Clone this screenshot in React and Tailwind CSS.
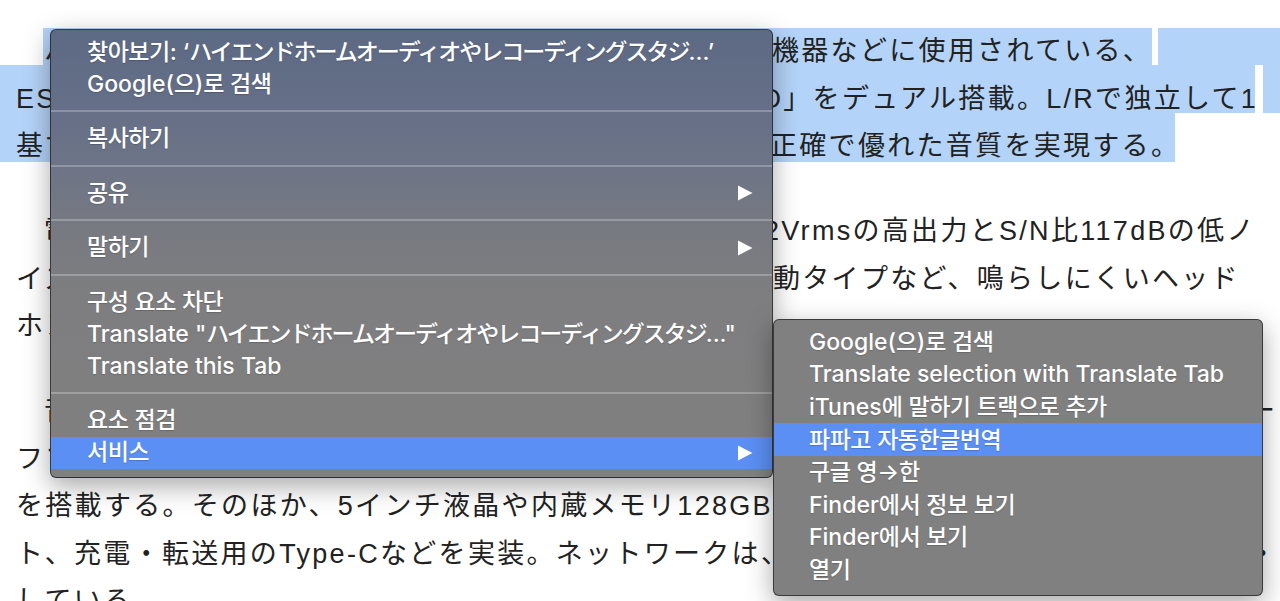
import React from "react";

const SEL = "bg-[#b4d3f8]";

function Hid({ w, children }) {
  return (
    <span className={"inline-block overflow-hidden whitespace-nowrap align-top " + w}>
      {children}
    </span>
  );
}

function typeOf(ch) {
  const c = ch.codePointAt(0);
  if (c >= 0xac00 && c <= 0xd7a3) return "ko";
  if ((c >= 0x3040 && c <= 0x30ff) || (c >= 0x4e00 && c <= 0x9fff)) return "ja";
  return "la";
}

const TRACK = {
  ko: "tracking-[-0.5px]",
  ja: "tracking-[-2px]",
  la: "",
};

function Txt({ s }) {
  const runs = [];
  let cur = null;
  for (const ch of s) {
    const t = typeOf(ch);
    if (cur && cur.t === t) cur.s += ch;
    else {
      cur = { t, s: ch };
      runs.push(cur);
    }
  }
  return (
    <>
      {runs.map((r, i) => (
        <span key={i} className={TRACK[r.t]}>
          {r.s}
        </span>
      ))}
    </>
  );
}

function Arrow() {
  return (
    <svg width="16" height="16" viewBox="0 0 16 16" className="shrink-0">
      <path d="M1 0.5 L15.5 8 L1 15.5 Z" fill="white" />
    </svg>
  );
}

function Row({ label, arrow, active, h = "h-[32px]", pl = "pl-[36px]" }) {
  return (
    <div
      className={
        "flex items-center justify-between pr-[19px] " +
        h +
        " " +
        pl +
        " " +
        (active ? "bg-[#5b8ff4]" : "")
      }
    >
      <span className="whitespace-nowrap">
        <Txt s={label} />
      </span>
      {arrow && <Arrow />}
    </div>
  );
}

function Sep() {
  return (
    <div className="flex h-[22.5px] items-center">
      <div className="h-[2px] w-full bg-white/25" />
    </div>
  );
}

function Article() {
  return (
    <div className="whitespace-nowrap pt-[28px] font-['Liberation_Sans','Noto_Sans_CJK_JP',sans-serif] text-[27px] tracking-[2.3px] text-[#222]">
      {/* paragraph 1 (selected) */}
      <div className="flex h-[37px] leading-[47.5px]">
        <div className="w-[43px] shrink-0" />
        <div className={"w-[1109px] shrink-0 pl-[1px] " + SEL}>
          <Hid w="w-[728px]">ハイエンドホームオーディオやレコーディングスタジオの</Hid>
          機器などに使用されている、
        </div>
        <div className="w-[6px] shrink-0" />
        <div className={"flex-1 " + SEL} />
      </div>
      <div className="flex h-[48px] leading-[47.5px]">
        <div className={"w-[1255px] shrink-0 pl-[16px] pt-[10.75px] " + SEL}>
          <Hid w="w-[744px]">ESS製の最上位DAC「ES9038PR</Hid>
          O」をデュアル搭載。L/Rで独立して1
        </div>
        <div className="w-[8px] shrink-0" />
        <div className={"flex-1 " + SEL} />
      </div>
      <div className="flex h-[49px] leading-[47.5px]">
        <div className={"w-[1175px] shrink-0 pl-[16px] pt-[10.25px] " + SEL}>
          <Hid w="w-[754px]">基ずつDACを割り当てることで、より</Hid>
          正確で優れた音質を実現する。
        </div>
      </div>

      {/* paragraph 2 */}
      <div className="mt-[46.25px] leading-[47.5px]">
        <div className="h-[47.5px] pl-[44px]">
          <Hid w="w-[720px]">電源部はアナログとデジタルを分離し、最大</Hid>
          2Vrmsの高出力とS/N比117dBの低ノ
        </div>
        <div className="h-[47.5px] pl-[16px]">
          <Hid w="w-[757px]">イズを実現し、バランス接続時には平面駆</Hid>
          動タイプなど、鳴らしにくいヘッド
        </div>
        <div className="h-[47.5px] pl-[16px]">ホンもしっかりと駆動できる。</div>
      </div>

      {/* paragraph 3 */}
      <div className="mt-[37.5px] leading-[47.5px]">
        <div className="h-[47.5px] pl-[44px]">
          <Hid w="w-[1204px]">音質面では、2基の高性能オペアンプを組み合わせたディスクリート構成のハ</Hid>
          ー
        </div>
        <div className="h-[47.5px] pl-[16px]">フブリッジ構成のアンプ回路と大容量バッテリー</div>
        <div className="h-[47.5px] pl-[16px]">
          を搭載する。そのほか、5インチ液晶や内蔵メモリ128GB、microSDカードスロッ
        </div>
        <div className="h-[47.5px] pl-[16px]">
          <Hid w="w-[1233px]">ト、充電・転送用のType-Cなどを実装。ネットワークは、Wi-FiとBluetoothに対応</Hid>・
        </div>
        <div className="h-[47.5px] pl-[16px]">している。</div>
      </div>
    </div>
  );
}

function MainMenu() {
  return (
    <div className="absolute left-[50px] top-[29px] w-[723px] overflow-hidden rounded-[6px] border border-black/55 bg-[linear-gradient(180deg,#5d6a84_0%,#646e87_15%,#6d7487_30%,#787a81_45%,#7e7e80_60%,#808080_100%)] pb-[8px] pt-[6px] font-['Inter','Noto_Sans_CJK_KR',sans-serif] text-[23px] font-medium text-white shadow-[0_8px_26px_rgba(0,0,0,0.35)] [text-shadow:0_1px_1px_rgba(0,0,0,0.18)]">
      <Row label="찾아보기: ‘ハイエンドホームオーディオやレコーディングスタジ...’" />
      <Row label="Google(으)로 검색" />
      <Sep />
      <Row label="복사하기" />
      <Sep />
      <Row label="공유" arrow />
      <Sep />
      <Row label="말하기" arrow />
      <Sep />
      <Row label="구성 요소 차단" />
      <Row label={'Translate "ハイエンドホームオーディオやレコーディングスタジ..."'} />
      <Row label="Translate this Tab" />
      <Sep />
      <Row label="요소 점검" />
      <Row label="서비스" arrow active />
    </div>
  );
}

function SubMenu() {
  const items = [
    "Google(으)로 검색",
    "Translate selection with Translate Tab",
    "iTunes에 말하기 트랙으로 추가",
    "파파고 자동한글번역",
    "구글 영→한",
    "Finder에서 정보 보기",
    "Finder에서 보기",
    "열기",
  ];
  return (
    <div className="absolute left-[773px] top-[319px] w-[490px] overflow-hidden rounded-[6px] border border-black/55 bg-[#808080] pb-[8.5px] pt-[5.7px] font-['Inter','Noto_Sans_CJK_KR',sans-serif] text-[23px] font-medium text-white shadow-[0_8px_26px_rgba(0,0,0,0.35)] [text-shadow:0_1px_1px_rgba(0,0,0,0.18)]">
      {items.map((it, i) => (
        <Row key={i} label={it} active={i === 3} h="h-[32.6px]" pl="pl-[35px]" />
      ))}
    </div>
  );
}

export default function App() {
  return (
    <div className="relative h-[601px] w-[1280px] overflow-hidden bg-white">
      <Article />
      <MainMenu />
      <SubMenu />
    </div>
  );
}
